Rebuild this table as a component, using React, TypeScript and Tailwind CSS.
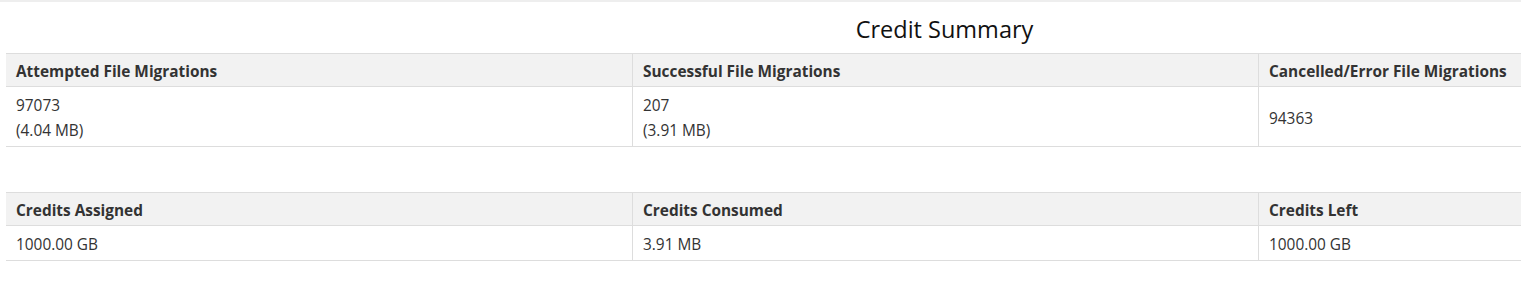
const migrations = [
  { label: "Attempted File Migrations", value: "97073", size: "(4.04 MB)" },
  { label: "Successful File Migrations", value: "207", size: "(3.91 MB)" },
  { label: "Cancelled/Error File Migrations", value: "94363" },
];

const credits = [
  { label: "Credits Assigned", value: "1000.00 GB" },
  { label: "Credits Consumed", value: "3.91 MB" },
  { label: "Credits Left", value: "1000.00 GB" },
];

type Cell = { label: string; value: string; size?: string };

function SummaryTable({ cells }: { cells: Cell[] }) {
  return (
    <div className="ml-[6px] border-y border-[#dddddd] text-[15.4px] text-[#333333]">
      <div className="grid grid-cols-[626px_626px_1fr] border-b border-[#dddddd] bg-[#f2f2f2]">
        {cells.map((cell, i) => (
          <div
            key={cell.label}
            className={`px-[10px] pt-[7.5px] pb-[4.5px] font-bold leading-[20px] ${i > 0 ? "border-l border-[#dddddd]" : ""}`}
          >
            {cell.label}
          </div>
        ))}
      </div>
      <div className="grid grid-cols-[626px_626px_1fr]">
        {cells.map((cell, i) => (
          <div
            key={cell.label}
            className={`flex flex-col justify-center px-[10px] pt-[6px] pb-[3px] leading-[25px] ${i > 0 ? "border-l border-[#dddddd]" : ""}`}
          >
            <span>{cell.value}</span>
            {cell.size && <span>{cell.size}</span>}
          </div>
        ))}
      </div>
    </div>
  );
}

export default function App() {
  return (
    <div className="min-h-[283px] bg-white font-['Open_Sans',sans-serif]">
      <div className="h-[2px] bg-[#eeeeee]" />
      <h2 className="pl-[368px] pt-[13px] pb-[9px] text-center text-[23.5px] leading-[29px] text-[#111111]">
        Credit Summary
      </h2>
      <SummaryTable cells={migrations} />
      <div className="h-[45px]" />
      <SummaryTable cells={credits} />
    </div>
  );
}
